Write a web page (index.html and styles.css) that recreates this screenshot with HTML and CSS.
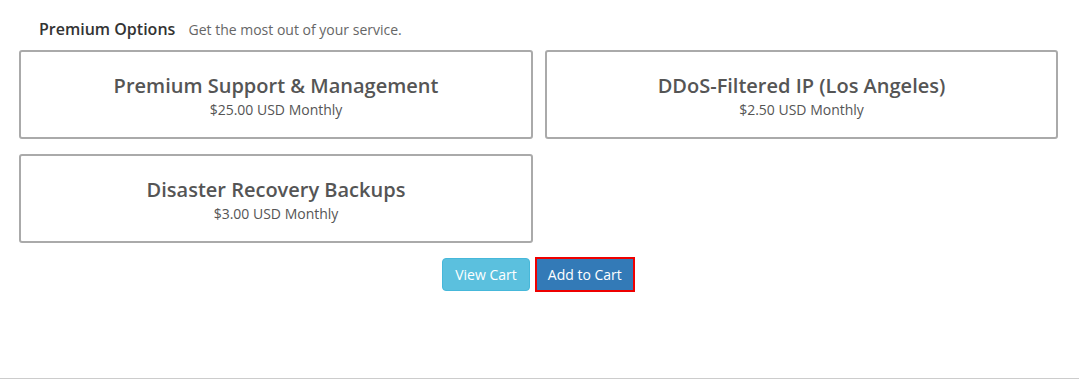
FILE: index.html
```html
<html><head>
    <title>Configure Product</title>
    <meta name="viewport" content="width=device-width, initial-scale=1">
    <link rel="stylesheet" href="styles.css">
    </head>
    <body>
    <div class="page">
        <div class="section-head">
            <span class="section-title">Premium Options</span>
            <span class="section-sub">Get the most out of your service.</span>
        </div>
        <div class="addons">
            <div class="addon">
                <div class="addon-name">Premium Support &amp; Management</div>
                <div class="addon-price">$25.00 USD Monthly</div>
            </div>
            <div class="addon">
                <div class="addon-name">DDoS-Filtered IP (Los Angeles)</div>
                <div class="addon-price">$2.50 USD Monthly</div>
            </div>
            <div class="addon">
                <div class="addon-name">Disaster Recovery Backups</div>
                <div class="addon-price">$3.00 USD Monthly</div>
            </div>
        </div>
        <div class="actions">
            <button class="btn btn-info">View Cart</button>
            <button class="btn btn-primary btn-focus">Add to Cart</button>
        </div>
    </div>
    </body>
    </html>
```
FILE: styles.css
```css
html {
    font-family: "Open Sans", sans-serif;
    background-color: #fff;
}
body {
    margin: 0;
}
.page {
    min-height: 379px;
    box-sizing: border-box;
    border-bottom: 1px solid #ccc;
    padding: 17px 21px 0 19px;
}
.section-head {
    padding-left: 20px;
    line-height: 24px;
    height: 33px;
}
.section-title {
    font-size: 16px;
    font-weight: 600;
    color: #333;
    margin-right: 9px;
}
.section-sub {
    font-size: 14px;
    color: #666;
}
.addons {
    display: grid;
    grid-template-columns: 514px 513px;
    column-gap: 12px;
    row-gap: 15px;
}
.addon {
    border: 2px solid #aaa;
    border-radius: 3px;
    padding: 20px 10px 17px;
    text-align: center;
    color: #555;
}
.addon-name {
    font-size: 20px;
    font-weight: 600;
    line-height: 28px;
}
.addon-price {
    font-size: 14px;
    line-height: 20px;
}
.actions {
    display: flex;
    justify-content: center;
    align-items: center;
    gap: 5px;
    margin-top: 14px;
}
.btn {
    font-family: "Open Sans", sans-serif;
    font-size: 14px;
    color: white;
    border: 1px solid transparent;
    border-radius: 4px;
    height: 33px;
    padding: 0 12px;
    cursor: pointer;
}
.btn-info {
    background-color: #5bc0de;
    border-color: #46b8da;
}
.btn-primary {
    background-color: #337ab7;
    border-color: #2e6da4;
}
.btn-focus {
    height: 35px;
    border: 2px solid #e00;
    border-radius: 0;
    padding: 0 11px;
}
```
